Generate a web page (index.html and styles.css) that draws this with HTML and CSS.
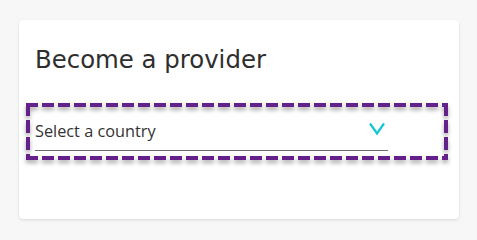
FILE: index.html
```html
<!DOCTYPE html>
<html lang="en">
<head>
<meta charset="utf-8">
<title>Become a provider</title>
<link rel="stylesheet" href="styles.css">
</head>
<body>
<div class="card">
  <h1 class="title">Become a provider</h1>
  <div class="field">
    <div class="select">
      <span class="select-label">Select a country</span>
      <svg class="chevron" width="16" height="13" viewBox="0 0 16 13" aria-hidden="true">
        <path d="M1 1.5 L8 11.5 L15 1.5" fill="none" stroke="#12c6cf" stroke-width="2.2" stroke-linejoin="miter"/>
      </svg>
    </div>
  </div>
</div>
</body>
</html>
```

FILE: styles.css
```css
html, body {
  margin: 0;
  padding: 0;
}
body {
  background: #f7f7f7;
  padding: 20px 18px 0 19px;
  width: 477px;
  height: 236px;
  box-sizing: border-box;
}
.card {
  width: 440px;
  height: 199px;
  box-sizing: border-box;
  background: #ffffff;
  border-radius: 4px;
  box-shadow: 0 1px 3px rgba(0, 0, 0, 0.12);
  padding: 26px 16px 0 16px;
}
.title {
  margin: 0 0 33px 0;
  font-family: "DejaVu Sans", sans-serif;
  font-weight: normal;
  font-size: 24.4px;
  line-height: 28px;
  color: #2e2e2e;
}
.field {
  position: relative;
  margin-left: -5px;
  width: 414px;
  box-sizing: border-box;
  padding: 0 5px 5px 5px;
}
.field::after {
  content: "";
  position: absolute;
  inset: -4px;
  background:
    repeating-linear-gradient(90deg, #65218a 0 12px, transparent 12px 16px) left top / 100% 4px no-repeat,
    repeating-linear-gradient(90deg, #65218a 0 12px, transparent 12px 16px) left bottom / 100% 4px no-repeat,
    repeating-linear-gradient(180deg, #65218a 0 13px, transparent 13px 17px) left top / 4px 100% no-repeat,
    repeating-linear-gradient(180deg, #65218a 0 13px, transparent 13px 17px) right top / 4px 100% no-repeat;
  filter: drop-shadow(0 3px 2px rgba(0, 0, 0, 0.35));
  pointer-events: none;
}
.select {
  width: 353px;
  box-sizing: border-box;
  display: flex;
  justify-content: space-between;
  align-items: flex-start;
  padding: 13px 3px 8px 0;
  border-bottom: 1px solid #6b6b6b;
}
.select-label {
  font-family: "Open Sans", sans-serif;
  font-size: 16.3px;
  line-height: 22px;
  color: #333333;
}
.chevron {
  display: block;
  margin-top: 2px;
}
```
